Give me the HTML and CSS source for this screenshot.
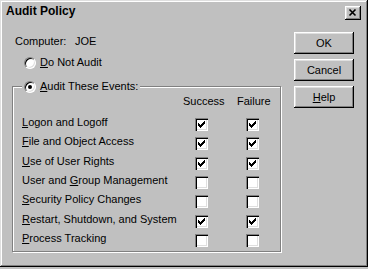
FILE: index.html
```html
<!DOCTYPE html>
<html lang="en">

<head>
    <meta charset="UTF-8">
    <meta name="viewport" content="width=device-width, initial-scale=1.0">
    <title>Audit Policy</title>
    <link rel="stylesheet" href="styles.css">
</head>

<body>
    <div class="dialog">
        <!-- Title row with close box -->
        <div class="titlebar">
            <span class="title">Audit Policy</span>
            <span class="close-btn">
                <svg width="16" height="14" viewBox="0 0 16 14">
                    <path d="M4.5 3.5 L10.5 9.5 M10.5 3.5 L4.5 9.5" stroke="#000" stroke-width="1.6" fill="none" />
                </svg>
            </span>
        </div>

        <div class="content">
            <div class="main">
                <div class="computer">
                    <span class="computer-label">Computer:</span><span>JOE</span>
                </div>

                <div class="radio-row">
                    <span class="radio"></span>
                    <span><u>D</u>o Not Audit</span>
                </div>

                <div class="group">
                    <div class="legend">
                        <span class="radio checked"></span>
                        <span><u>A</u>udit These Events:</span>
                    </div>

                    <div class="event-grid header">
                        <span></span>
                        <span>Success</span>
                        <span>Failure</span>
                    </div>

                    <div class="event-grid row">
                        <span><u>L</u>ogon and Logoff</span>
                        <span class="check success checked"></span>
                        <span class="check failure checked"></span>
                    </div>
                    <div class="event-grid row">
                        <span><u>F</u>ile and Object Access</span>
                        <span class="check success checked"></span>
                        <span class="check failure checked"></span>
                    </div>
                    <div class="event-grid row">
                        <span><u>U</u>se of User Rights</span>
                        <span class="check success checked"></span>
                        <span class="check failure checked"></span>
                    </div>
                    <div class="event-grid row">
                        <span>User and <u>G</u>roup Management</span>
                        <span class="check success"></span>
                        <span class="check failure"></span>
                    </div>
                    <div class="event-grid row">
                        <span><u>S</u>ecurity Policy Changes</span>
                        <span class="check success"></span>
                        <span class="check failure"></span>
                    </div>
                    <div class="event-grid row">
                        <span><u>R</u>estart, Shutdown, and System</span>
                        <span class="check success checked"></span>
                        <span class="check failure checked"></span>
                    </div>
                    <div class="event-grid row">
                        <span><u>P</u>rocess Tracking</span>
                        <span class="check success"></span>
                        <span class="check failure"></span>
                    </div>
                </div>
            </div>

            <!-- Dialog buttons -->
            <div class="buttons">
                <div class="btn">OK</div>
                <div class="btn">Cancel</div>
                <div class="btn"><u>H</u>elp</div>
            </div>
        </div>
    </div>
</body>

</html>
```

FILE: styles.css
```css
body {
    margin: 0;
    padding: 0;
    background-color: #c0c0c0;
    font-family: "Liberation Sans", Arial, sans-serif;
    font-size: 11px;
    line-height: 13px;
    color: #000;
}

.dialog {
    width: 368px;
    height: 267px;
    box-sizing: border-box;
    background-color: #c0c0c0;
    box-shadow: inset -1px -1px #000, inset 1px 1px #dfdfdf, inset -2px -2px #808080, inset 2px 2px #fff;
}

.titlebar {
    display: flex;
    justify-content: space-between;
    height: 24px;
    padding: 4px 7px 0 6px;
    box-sizing: border-box;
}

.title {
    font-size: 12px;
    line-height: 14px;
    font-weight: bold;
}

.close-btn {
    display: block;
    width: 16px;
    height: 14px;
    margin-top: 2px;
    box-shadow: inset -1px -1px #000, inset 1px 1px #fff, inset -2px -2px #808080, inset 2px 2px #dfdfdf;
}

.close-btn svg {
    display: block;
}

.content {
    display: flex;
    padding-left: 12px;
}

.main {
    width: 270px;
}

.computer {
    margin-top: 11px;
    padding-left: 3px;
}

.computer-label {
    display: inline-block;
    width: 60px;
}

.radio-row {
    display: flex;
    align-items: center;
    gap: 4px;
    margin-top: 8px;
    padding-left: 12px;
}

.radio {
    position: relative;
    width: 12px;
    height: 12px;
    box-sizing: border-box;
    border-radius: 50%;
    background-color: #fff;
    border: 1px solid;
    border-color: #808080 #fff #fff #808080;
    box-shadow: inset 1px 1px #000, inset -1px -1px #dfdfdf;
}

.radio.checked::after {
    content: "";
    position: absolute;
    left: 3px;
    top: 3px;
    width: 4px;
    height: 4px;
    border-radius: 50%;
    background-color: #000;
}

.group {
    position: relative;
    margin-top: 17px;
    width: 269px;
    height: 166px;
    box-sizing: border-box;
    border: 1px solid #808080;
    box-shadow: inset 1px 1px #fff, 1px 1px #fff;
    padding: 8px 0 0 9px;
}

.legend {
    position: absolute;
    top: -7px;
    left: 9px;
    display: flex;
    align-items: center;
    gap: 4px;
    padding: 0 2px;
    background-color: #c0c0c0;
}

.event-grid {
    display: grid;
    grid-template-columns: 161px 54px 40px;
}

.header {
    margin-bottom: 8px;
}

.row {
    height: 19.33px;
}

.check {
    width: 13px;
    height: 13px;
    margin-top: 2px;
    box-sizing: border-box;
    background-color: #fff;
    box-shadow: inset 1px 1px #808080, inset 2px 2px #000, inset -1px -1px #fff, inset -2px -2px #dfdfdf;
}

.check.success {
    margin-left: 12px;
}

.check.failure {
    margin-left: 9px;
}

.check.checked {
    background-image: url("data:image/svg+xml,%3Csvg xmlns='http://www.w3.org/2000/svg' width='13' height='13'%3E%3Cpath d='M3 5h1v1h1v1h1V6h1V5h1V4h1V3h1v3H9v1H8v1H7v1H6v1H5V9H4V8H3z' fill='%23000'/%3E%3C/svg%3E");
}

.buttons {
    display: flex;
    flex-direction: column;
    gap: 5px;
    margin-top: 8px;
    margin-left: 12px;
}

.btn {
    width: 60px;
    height: 22px;
    box-sizing: border-box;
    display: flex;
    align-items: center;
    justify-content: center;
    box-shadow: inset -1px -1px #000, inset 1px 1px #fff, inset -2px -2px #808080, inset 2px 2px #dfdfdf;
}
```
